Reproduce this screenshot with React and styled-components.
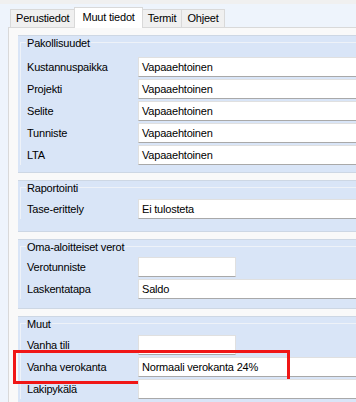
import React from "react";
import styled, { createGlobalStyle, css } from "styled-components";

const Global = createGlobalStyle`
  html, body {
    margin: 0;
    padding: 0;
    overflow: hidden;
    background: #eef4fc;
  }
  body {
    font-family: "Liberation Sans", Arial, sans-serif;
    font-size: 11px;
    letter-spacing: -0.2px;
    color: #000;
  }
`;

const Window = styled.div`
  width: 356px;
  height: 402px;
  overflow: hidden;
  background: #eef4fc;
  border-top: 4px solid #f0f0f0;
  box-sizing: border-box;
  display: flex;
  flex-direction: column;
`;

const TabBar = styled.div`
  display: flex;
  align-items: flex-end;
  flex: none;
  height: 23px;
  padding-left: 10px;
  position: relative;
  z-index: 1;
`;

const Tab = styled.div`
  box-sizing: border-box;
  border: 1px solid #d9d9d9;
  border-bottom: none;
  background: #f0f0f0;
  height: 18px;
  line-height: 17px;
  padding: 0 5px;
  white-space: nowrap;
  margin-left: ${(p) => (p.$first ? 0 : -1)}px;
  ${(p) =>
    p.$active &&
    css`
      background: #ffffff;
      height: 21px;
      line-height: 18px;
      padding: 0 7px;
      margin-bottom: -1px;
      position: relative;
      z-index: 2;
    `}
`;

const Panel = styled.div`
  flex: 1;
  min-height: 0;
  overflow: hidden;
  margin-left: 8px;
  border-top: 1px solid #d9d9d9;
  border-left: 1px solid #d9d9d9;
  background: #f9f9f9;
  padding: 7px 0 0 9px;
  display: flex;
  flex-direction: column;
  gap: 7px;
`;

const Group = styled.div`
  flex: none;
  background: #d9e5f7;
  border-top: 1px solid #cdd7e4;
  border-bottom: 1px solid #cdd7e4;
  padding-bottom: ${(p) => p.$pb}px;
`;

const Legend = styled.div`
  display: flex;
  align-items: center;
  height: 13px;
  margin-left: 2px;
  white-space: nowrap;

  &::before {
    content: "";
    align-self: flex-end;
    width: 6px;
    height: 7px;
    box-sizing: border-box;
    border-top: 1px solid #eef2f8;
    border-left: 1px solid #eef2f8;
  }
  &::after {
    content: "";
    flex: 1;
    height: 0;
    border-top: 1px solid #eef2f8;
  }
`;

const LegendText = styled.span`
  padding: 0 1px;
`;

const Body = styled.div`
  margin-left: 2px;
  border-left: 1px solid #eef2f8;
  padding-top: ${(p) => p.$pt}px;
  padding-left: 6px;
  display: flex;
  flex-direction: column;
  gap: 2px;
`;

const Row = styled.div`
  display: grid;
  grid-template-columns: 111px 1fr;
  align-items: center;
  height: 20px;
  position: relative;

  ${(p) =>
    p.$highlight &&
    css`
      &::after {
        content: "";
        position: absolute;
        left: -14px;
        top: -7px;
        width: 277px;
        height: 34px;
        box-sizing: border-box;
        border: 3px solid #f01616;
        pointer-events: none;
      }
    `}
`;

const Label = styled.div`
  white-space: nowrap;
`;

const Field = styled.div`
  box-sizing: border-box;
  height: 20px;
  background: #ffffff;
  border: 1px solid #e0e0e0;
  border-bottom-color: #a9a9a9;
  border-right: ${(p) => (p.$short ? "1px solid #e0e0e0" : "none")};
  padding: 0 3px;
  line-height: 18px;
  white-space: nowrap;
  width: ${(p) => (p.$short ? "98px" : "auto")};
`;

const groups = [
  {
    title: "Pakollisuudet",
    pt: 8,
    pb: 7,
    rows: [
      ["Kustannuspaikka", "Vapaaehtoinen"],
      ["Projekti", "Vapaaehtoinen"],
      ["Selite", "Vapaaehtoinen"],
      ["Tunniste", "Vapaaehtoinen"],
      ["LTA", "Vapaaehtoinen"],
    ],
  },
  {
    title: "Raportointi",
    pt: 5,
    pb: 12,
    rows: [["Tase-erittely", "Ei tulosteta"]],
  },
  {
    title: "Oma-aloitteiset verot",
    pt: 4,
    pb: 9,
    rows: [
      ["Verotunniste", "", true],
      ["Laskentatapa", "Saldo"],
    ],
  },
  {
    title: "Muut",
    pt: 5,
    pb: 10,
    rows: [
      ["Vanha tili", "", true],
      ["Vanha verokanta", "Normaali verokanta 24%", false, true],
      ["Lakipykälä", ""],
    ],
  },
];

export default function App() {
  return (
    <>
      <Global />
      <Window>
        <TabBar>
          <Tab $first>Perustiedot</Tab>
          <Tab $active>Muut tiedot</Tab>
          <Tab>Termit</Tab>
          <Tab>Ohjeet</Tab>
        </TabBar>
        <Panel>
          {groups.map((g) => (
            <Group key={g.title} $pb={g.pb}>
              <Legend>
                <LegendText>{g.title}</LegendText>
              </Legend>
              <Body $pt={g.pt}>
                {g.rows.map(([label, value, short, hl]) => (
                  <Row key={label} $highlight={hl}>
                    <Label>{label}</Label>
                    <Field $short={short}>{value}</Field>
                  </Row>
                ))}
              </Body>
            </Group>
          ))}
        </Panel>
      </Window>
    </>
  );
}
